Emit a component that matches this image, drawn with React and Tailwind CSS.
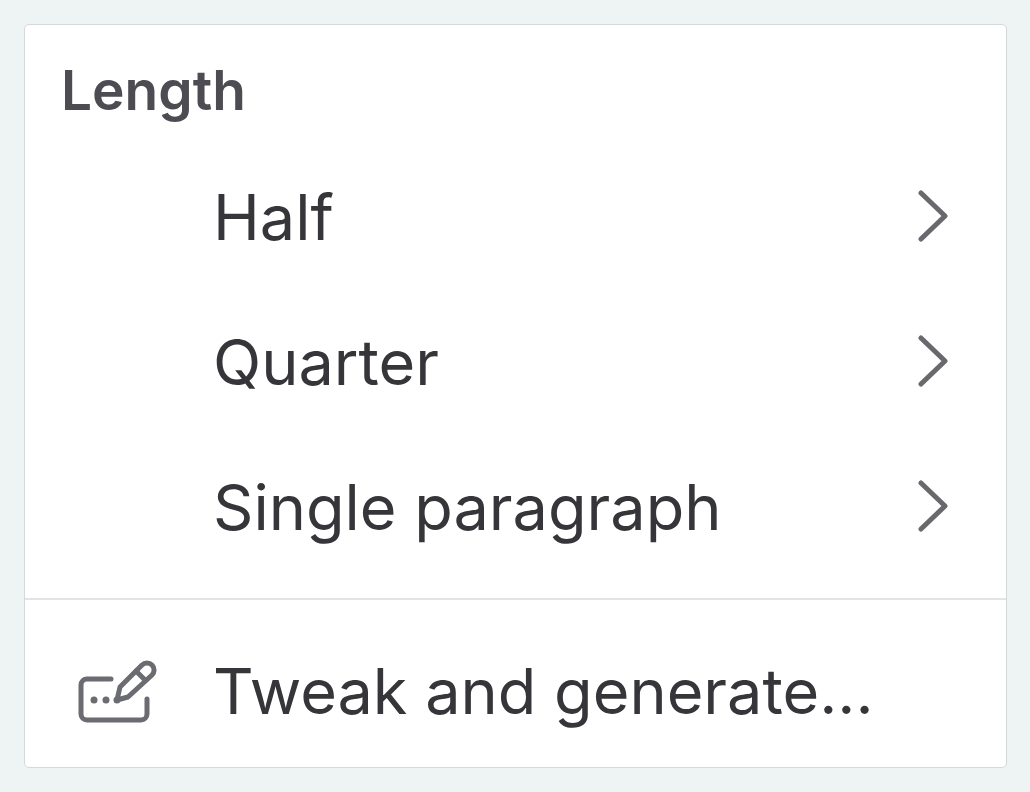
import React from 'react'

const lengthOptions = [
  { id: 'half', label: 'Half' },
  { id: 'quarter', label: 'Quarter' },
  { id: 'paragraph', label: 'Single paragraph' }
]

const ChevronIcon = () => (
  <svg
    className="h-14 w-8 shrink-0"
    viewBox="0 0 32 56"
    fill="none"
    stroke="currentColor"
    strokeWidth="5"
    strokeLinecap="round"
    strokeLinejoin="round"
    aria-hidden="true"
  >
    <path d="M4 3 28 26 4 49" />
  </svg>
)

const TweakIcon = () => (
  <svg
    className="h-16 w-20 shrink-0"
    viewBox="0 0 80 64"
    fill="none"
    stroke="currentColor"
    strokeWidth="5"
    strokeLinecap="round"
    strokeLinejoin="round"
    aria-hidden="true"
  >
    <path d="M34 19H10a6 6 0 0 0-6 6v29a6 6 0 0 0 6 6h54a6 6 0 0 0 6-6V39" />
    <path d="m40 40 3-13L65 5a6.700 6.700 0 0 1 10 10L51 37Z" />
    <path d="m59 11 9.500 9.500" />
    <g fill="currentColor" stroke="none">
      <circle cx="17" cy="40" r="3.500" />
      <circle cx="29" cy="40" r="3.500" />
      <circle cx="40" cy="40" r="3.500" />
    </g>
  </svg>
)

const App = () => {
  return (
    <main className="min-h-screen bg-[#edf4f3] py-6 pr-[23px] pl-6 font-['Inter',sans-serif]">
      <div className="rounded-[5px] border border-[#d3d8d8] bg-white text-[#36363a]">
        <section aria-labelledby="length-heading" className="pt-8 pb-[18px]">
          <h2
            id="length-heading"
            className="px-9 text-[55px] leading-[66px] font-semibold text-[#4c4c52]"
          >
            Length
          </h2>
          <div className="mt-[22px]">
            {lengthOptions.map((option) => (
              <button
                key={option.id}
                type="button"
                className="flex h-[145px] w-full items-center justify-between pr-[57px] pl-[188px] text-left text-[63px]"
              >
                {option.label}
                <span className="text-[#68696d]">
                  <ChevronIcon />
                </span>
              </button>
            ))}
          </div>
        </section>
        <div className="border-t-2 border-[#e2e3e4]">
          <button
            type="button"
            className="flex h-[167px] w-full items-center pt-4 pl-[52px] text-left text-[63px]"
          >
            <span className="w-[136px] text-[#6b6b72]">
              <TweakIcon />
            </span>
            Tweak and generate...
          </button>
        </div>
      </div>
    </main>
  )
}

export default App
